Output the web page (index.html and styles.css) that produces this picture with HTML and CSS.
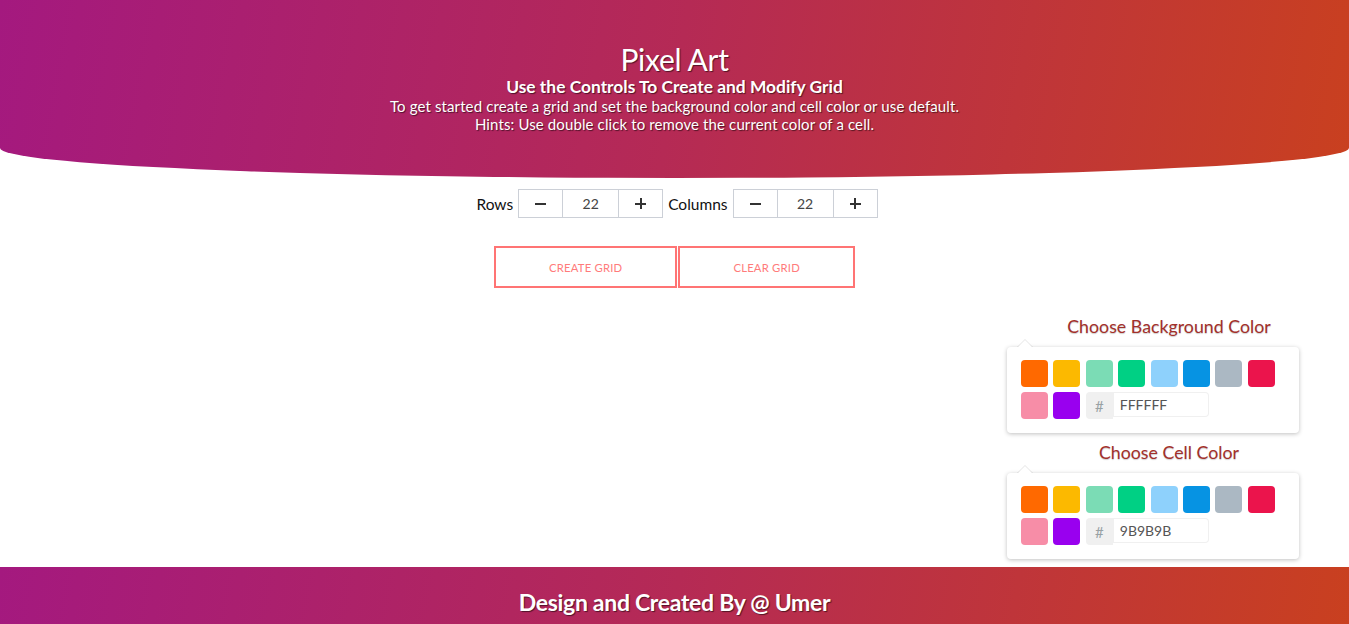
FILE: index.html
```html
<!DOCTYPE html>
<html lang="en">
<head>
<meta charset="utf-8">
<title>Pixel Art</title>
<link rel="stylesheet" href="styles.css">
</head>
<body>
<header class="hero">
  <h1 class="hero-title">Pixel Art</h1>
  <h2 class="hero-sub">Use the Controls To Create and Modify Grid</h2>
  <p class="hero-text">To get started create a grid and set the background color and cell color or use default.</p>
  <p class="hero-text">Hints: Use double click to remove the current color of a cell.</p>
</header>

<section class="controls">
  <span class="ctl-label">Rows</span>
  <div class="stepper">
    <span class="step-btn"><span class="minus"></span></span>
    <span class="step-val">22</span>
    <span class="step-btn"><span class="plus"></span></span>
  </div>
  <span class="ctl-label">Columns</span>
  <div class="stepper">
    <span class="step-btn"><span class="minus"></span></span>
    <span class="step-val">22</span>
    <span class="step-btn"><span class="plus"></span></span>
  </div>
</section>

<section class="actions">
  <button class="act-btn">CREATE GRID</button>
  <button class="act-btn">CLEAR GRID</button>
</section>

<main class="workspace">
  <div class="canvas"></div>
  <aside class="pickers">
    <h3 class="picker-title">Choose Background Color</h3>
    <div class="picker">
      <div class="swatch" style="background:#FF6900"></div>
      <div class="swatch" style="background:#FCB900"></div>
      <div class="swatch" style="background:#7BDCB5"></div>
      <div class="swatch" style="background:#00D084"></div>
      <div class="swatch" style="background:#8ED1FC"></div>
      <div class="swatch" style="background:#0693E3"></div>
      <div class="swatch" style="background:#ABB8C3"></div>
      <div class="swatch" style="background:#EB144C"></div>
      <div class="swatch" style="background:#F78DA7"></div>
      <div class="swatch" style="background:#9900EF"></div>
      <div class="hash">#</div>
      <div class="hex">FFFFFF</div>
    </div>
    <h3 class="picker-title second">Choose Cell Color</h3>
    <div class="picker">
      <div class="swatch" style="background:#FF6900"></div>
      <div class="swatch" style="background:#FCB900"></div>
      <div class="swatch" style="background:#7BDCB5"></div>
      <div class="swatch" style="background:#00D084"></div>
      <div class="swatch" style="background:#8ED1FC"></div>
      <div class="swatch" style="background:#0693E3"></div>
      <div class="swatch" style="background:#ABB8C3"></div>
      <div class="swatch" style="background:#EB144C"></div>
      <div class="swatch" style="background:#F78DA7"></div>
      <div class="swatch" style="background:#9900EF"></div>
      <div class="hash">#</div>
      <div class="hex">9B9B9B</div>
    </div>
  </aside>
</main>

<footer class="footer">
  <p class="footer-text">Design and Created By @ Umer</p>
</footer>
</body>
</html>
```

FILE: styles.css
```css
* { box-sizing: border-box; }

body {
  margin: 0;
  font-family: "Lato", "Open Sans", "Liberation Sans", sans-serif;
  color: #111;
  background: #fff;
}

.hero {
  height: 178px;
  padding-top: 41px;
  text-align: center;
  color: #fff;
  background: linear-gradient(100deg, #a4197f 0%, #b52a55 50%, #c9401f 100%);
  border-radius: 0 0 50% 50% / 0 0 30px 30px;
  text-shadow: 1px 1px 1px rgba(0, 0, 0, 0.55);
}

.hero-title {
  margin: 0;
  font-size: 30px;
  line-height: 36px;
  font-weight: 400;
  letter-spacing: -0.3px;
}

.hero-sub {
  margin: 0;
  font-size: 17.4px;
  line-height: 20px;
  font-weight: 700;
}

.hero-text {
  margin: 0;
  font-size: 15px;
  line-height: 18px;
  letter-spacing: 0.12px;
}

.controls {
  margin-top: 11px;
  display: flex;
  justify-content: center;
  align-items: center;
  gap: 5px;
  padding-left: 5px;
}

.ctl-label {
  font-size: 15.5px;
  color: #111;
}

.stepper {
  display: flex;
  height: 29px;
  border: 1px solid #ccd0d7;
}

.step-btn {
  width: 43px;
  display: flex;
  align-items: center;
  justify-content: center;
  position: relative;
}

.minus,
.plus {
  position: relative;
  width: 11px;
  height: 11px;
}

.minus::before,
.plus::before,
.plus::after {
  content: "";
  position: absolute;
  background: #333;
}

.minus::before,
.plus::before {
  left: 0;
  top: 4.5px;
  width: 11px;
  height: 2px;
}

.plus::after {
  left: 4.5px;
  top: 0;
  width: 2px;
  height: 11px;
}

.step-val {
  width: 57px;
  display: flex;
  align-items: center;
  justify-content: center;
  font-size: 14px;
  color: #444;
  border-left: 1px solid #ccd0d7;
  border-right: 1px solid #ccd0d7;
}

.actions {
  margin-top: 28px;
  display: flex;
  justify-content: center;
  gap: 1px;
}

.act-btn {
  height: 42px;
  padding: 0 53px;
  background: #fff;
  border: 2px solid #ff7474;
  color: #ff7b7b;
  font-family: inherit;
  font-size: 11.3px;
  letter-spacing: 0.2px;
  cursor: pointer;
}

.workspace {
  display: flex;
  padding-top: 28px;
  padding-right: 18px;
}

.canvas {
  flex: 1;
}

.pickers {
  width: 324px;
}

.picker-title {
  margin: 0 0 11px;
  text-align: center;
  font-size: 17.8px;
  line-height: 20px;
  font-weight: 400;
  color: #a3302b;
  text-shadow: 0 1px 1px rgba(0, 0, 0, 0.2);
}

.picker-title.second {
  margin-top: 9px;
}

.picker {
  position: relative;
  width: 292px;
  padding: 13px 8px 8px 14px;
  display: flex;
  flex-wrap: wrap;
  background: #fff;
  border-radius: 4px;
  box-shadow: 0 1px 4px rgba(0, 0, 0, 0.25);
}

.picker::before {
  content: "";
  position: absolute;
  top: -8px;
  left: 10px;
  border-style: solid;
  border-width: 0 8px 8px 8px;
  border-color: transparent transparent rgba(0, 0, 0, 0.1) transparent;
}

.picker::after {
  content: "";
  position: absolute;
  top: -7px;
  left: 11px;
  border-style: solid;
  border-width: 0 7px 7px 7px;
  border-color: transparent transparent #fff transparent;
}

.swatch {
  width: 27px;
  height: 27px;
  margin: 0 5.4px 5.4px 0;
  border-radius: 4px;
}

.hash {
  width: 27px;
  height: 27px;
  background: #f0f0f0;
  border-radius: 4px 0 0 4px;
  color: #98a1a4;
  font-size: 15px;
  display: flex;
  align-items: center;
  justify-content: center;
}

.hex {
  width: 96px;
  height: 25px;
  padding-left: 7px;
  font-size: 14px;
  line-height: 25px;
  color: #555;
  border-radius: 0 4px 4px 0;
  box-shadow: inset 0 0 0 1px #f0f0f0;
}

.footer {
  margin-top: 8px;
  height: 72px;
  padding-top: 22px;
  text-align: center;
  background: linear-gradient(100deg, #a4197f 0%, #b52a55 50%, #c9401f 100%);
}

.footer-text {
  margin: 0;
  color: #fff;
  font-size: 23px;
  line-height: 26px;
  font-weight: 700;
  letter-spacing: -0.3px;
  text-shadow: 1px 1px 1px rgba(0, 0, 0, 0.55);
}
```
